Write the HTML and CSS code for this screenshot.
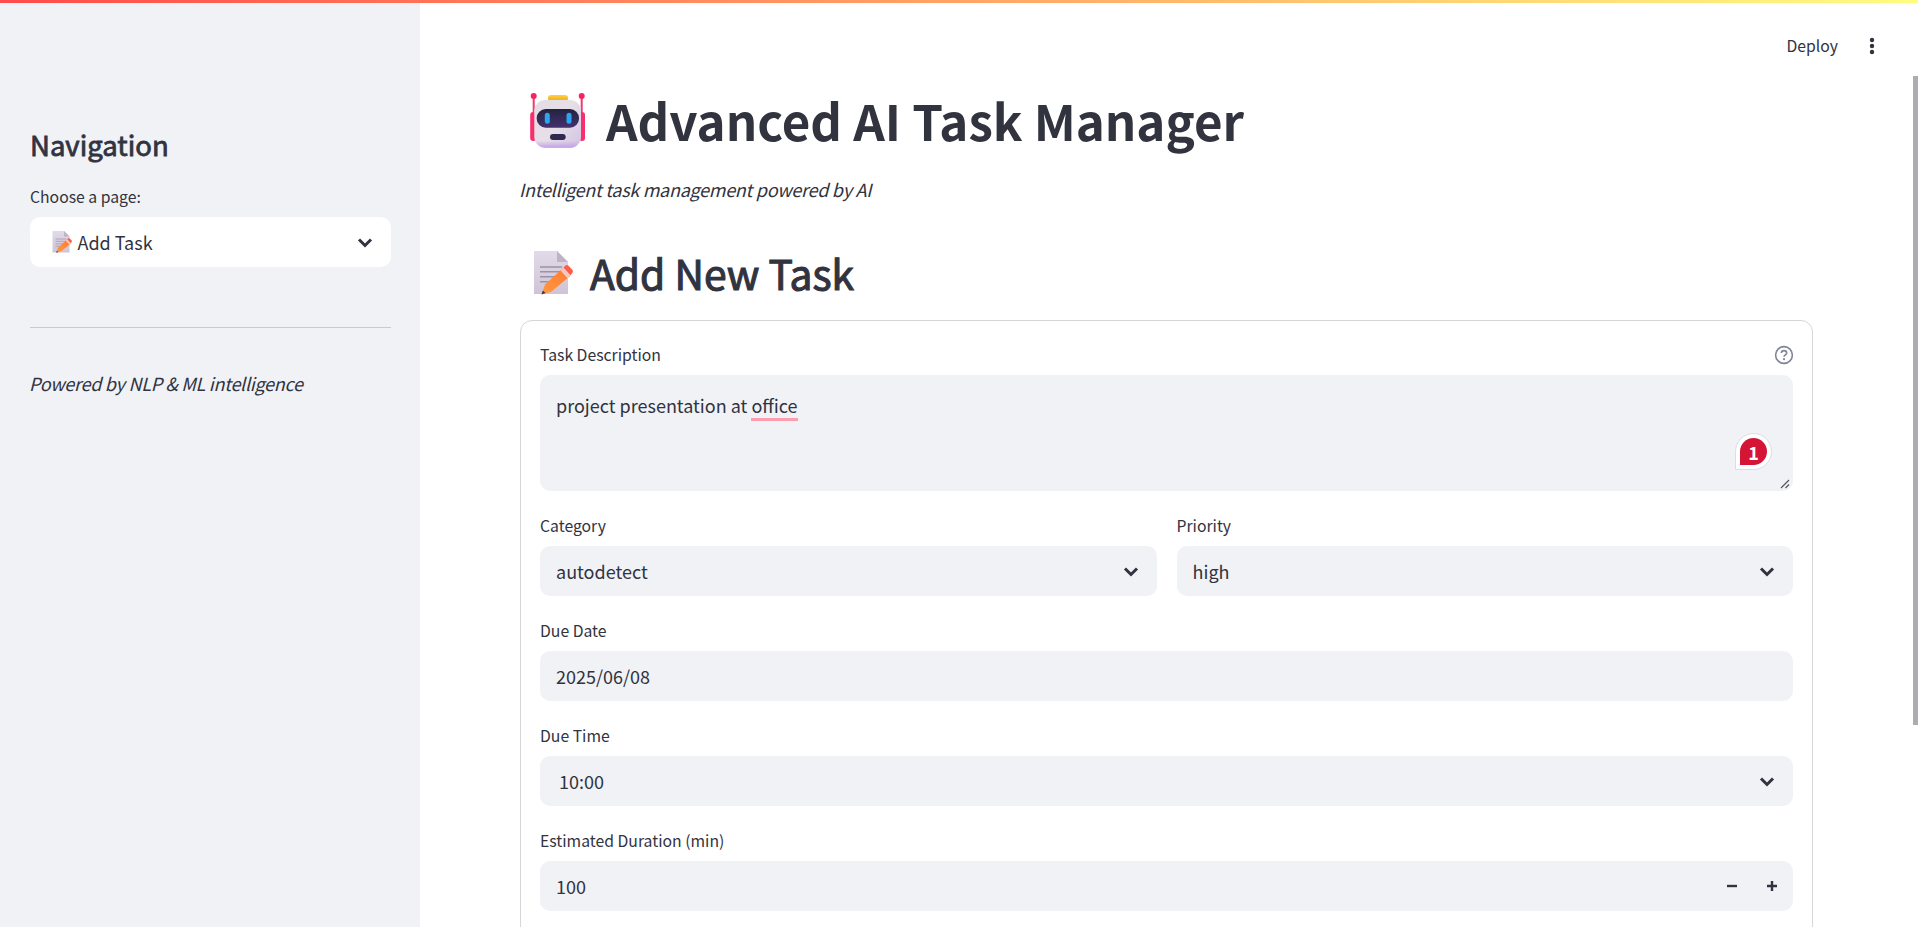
FILE: index.html
```html
<!DOCTYPE html>
<html lang="en">
<head>
<meta charset="utf-8">
<title>Advanced AI Task Manager</title>
<link rel="stylesheet" href="styles.css">
</head>
<body>
<svg class="defs" width="0" height="0" aria-hidden="true">
  <defs>
    <linearGradient id="docFill" x1="0" y1="0" x2="0" y2="1">
      <stop offset="0" stop-color="#e2dae8"/>
      <stop offset="1" stop-color="#cfc4d6"/>
    </linearGradient>
    <linearGradient id="pencilBody" x1="0" y1="1" x2="1" y2="0">
      <stop offset="0" stop-color="#ff9a3c"/>
      <stop offset="1" stop-color="#ff7a35"/>
    </linearGradient>
    <linearGradient id="headFill" x1="0" y1="0" x2="1" y2="0.8">
      <stop offset="0" stop-color="#e3dde3"/>
      <stop offset="0.55" stop-color="#e6dfe8"/>
      <stop offset="1" stop-color="#d6c8e4"/>
    </linearGradient>
    <linearGradient id="headBase" x1="0" y1="0" x2="0" y2="1">
      <stop offset="0.85" stop-color="#c9a8e6" stop-opacity="0"/>
      <stop offset="1" stop-color="#c39ce6"/>
    </linearGradient>
    <linearGradient id="visorFill" x1="0" y1="0" x2="0" y2="1">
      <stop offset="0" stop-color="#22233f"/>
      <stop offset="1" stop-color="#45306e"/>
    </linearGradient>
    <linearGradient id="capFill" x1="0" y1="0" x2="0" y2="1">
      <stop offset="0" stop-color="#ffd23c"/>
      <stop offset="1" stop-color="#eda61f"/>
    </linearGradient>
    <symbol id="memo" viewBox="0 0 60 55">
      <path d="M9 6H32L43 17V49H9Z" fill="url(#docFill)"/>
      <path d="M32 6L43 17H32Z" fill="#bdb3c4"/>
      <path d="M15 22H37M15 26.7H37M15 31.7H32M15 36.7H24" stroke="#9a92a6" stroke-width="1.4" fill="none"/>
      <path d="M16.5 49.5L20 39.5L37 24L44 32L26.5 46.5Z" fill="url(#pencilBody)"/>
      <path d="M37 24L40.5 20.5Q42 19.5 43.5 20.8L47.5 25Q48.5 26.5 47.3 28L44 32Z" fill="#fb5e46"/>
      <path d="M35.5 25.5L38.5 22.5L45.5 30.3L42.5 33.2Z" fill="#f2c9c2"/>
      <path d="M16.5 49.5L17.8 45.5L20.5 48Z" fill="#4b2e52"/>
    </symbol>
    <symbol id="chevron" viewBox="0 0 16 11">
      <path d="M2 2.5L8 8.5L14 2.5" fill="none" stroke="#31333f" stroke-width="3"/>
    </symbol>
  </defs>
</svg>
<div class="topbar"></div>
<div class="app">
  <aside class="sidebar">
    <h2 class="side-title">Navigation</h2>
    <div class="field-label side-label">Choose a page:</div>
    <div class="select select-white">
      <span class="select-value"><svg class="memo-small"><use href="#memo"/></svg>Add Task</span>
      <svg class="chevron"><use href="#chevron"/></svg>
    </div>
    <hr class="side-rule">
    <p class="side-note">Powered by NLP &amp; ML intelligence</p>
  </aside>
  <main class="main">
    <div class="toolbar">
      <span class="deploy">Deploy</span>
      <svg class="kebab" viewBox="0 0 6 18"><circle cx="3" cy="3" r="2.2"/><circle cx="3" cy="9" r="2.2"/><circle cx="3" cy="15" r="2.2"/></svg>
    </div>
    <div class="title-row">
      <svg class="robot" viewBox="0 0 80 70">
        <path d="M13.7 11V32M61.7 11V32" stroke="#ef3a6e" stroke-width="2"/>
        <circle cx="13.7" cy="11" r="3" fill="#f5245f"/>
        <circle cx="61.7" cy="11" r="3" fill="#f5245f"/>
        <rect x="10.2" y="27" width="6" height="29" rx="3" fill="#f72f6c"/>
        <rect x="59" y="27" width="6" height="29" rx="3" fill="#f72f6c"/>
        <rect x="28" y="10" width="20" height="6.5" rx="3.2" fill="url(#capFill)"/>
        <rect x="14.3" y="15" width="46.7" height="47.7" rx="11" fill="url(#headFill)"/>
        <rect x="14.3" y="15" width="46.7" height="47.7" rx="11" fill="url(#headBase)"/>
        <rect x="16.7" y="24" width="42.3" height="18.7" rx="9" fill="url(#visorFill)"/>
        <rect x="24.8" y="27.8" width="5" height="11" rx="2.5" fill="#29a6ee"/>
        <rect x="46.5" y="27.8" width="5" height="11" rx="2.5" fill="#29a6ee"/>
        <rect x="30" y="49" width="15.7" height="6" rx="3" fill="#2f2850"/>
      </svg>
      <h1 class="title">Advanced AI Task Manager</h1>
    </div>
    <p class="subtitle">Intelligent task management powered by AI</p>
    <div class="section-row">
      <svg class="memo-large"><use href="#memo"/></svg>
      <h2 class="section-title">Add New Task</h2>
    </div>
    <form class="card">
      <div class="field">
        <div class="label-row">
          <span class="field-label">Task Description</span>
          <svg class="help" viewBox="0 0 20 20">
            <circle cx="10" cy="10" r="8.4" fill="none" stroke="#808495" stroke-width="1.6"/>
            <path d="M7.3 8C7.4 6.4 8.6 5.6 10 5.6C11.5 5.6 12.7 6.6 12.7 7.9C12.7 9.7 10 9.9 10 11.8" fill="none" stroke="#808495" stroke-width="1.6"/>
            <circle cx="10" cy="14.2" r="1.1" fill="#808495"/>
          </svg>
        </div>
        <div class="textarea">
          <span>project presentation at <span class="misspelled">office</span></span>
          <div class="badge"><span class="badge-dot">1</span></div>
          <svg class="resize" viewBox="0 0 10 10"><path d="M1 9L9 1M5.5 9L9 5.5" stroke="#55565f" stroke-width="1.2" fill="none"/></svg>
        </div>
      </div>
      <div class="two-col">
        <div class="field">
          <div class="label-row"><span class="field-label">Category</span></div>
          <div class="select"><span class="select-value">autodetect</span><svg class="chevron"><use href="#chevron"/></svg></div>
        </div>
        <div class="field">
          <div class="label-row"><span class="field-label">Priority</span></div>
          <div class="select"><span class="select-value">high</span><svg class="chevron"><use href="#chevron"/></svg></div>
        </div>
      </div>
      <div class="field">
        <div class="label-row"><span class="field-label">Due Date</span></div>
        <div class="select"><span class="select-value">2025/06/08</span></div>
      </div>
      <div class="field">
        <div class="label-row"><span class="field-label">Due Time</span></div>
        <div class="select"><span class="select-value time-value">10:00</span><svg class="chevron"><use href="#chevron"/></svg></div>
      </div>
      <div class="field">
        <div class="label-row"><span class="field-label">Estimated Duration (min)</span></div>
        <div class="select">
          <span class="select-value">100</span>
          <span class="steppers">
            <svg class="stepper" viewBox="0 0 10 10"><path d="M0 5H10" stroke="#31333f" stroke-width="2.4"/></svg>
            <svg class="stepper" viewBox="0 0 10 10"><path d="M0 5H10M5 0V10" stroke="#31333f" stroke-width="2.4"/></svg>
          </span>
        </div>
      </div>
    </form>
    <div class="scrollbar"></div>
  </main>
</div>
</body>
</html>
```
FILE: styles.css
```css
* { box-sizing: border-box; }
html, body { margin: 0; height: 100%; overflow: hidden; }
body {
  display: flex;
  flex-direction: column;
  font-family: "Noto Sans CJK SC", "Source Sans Pro", "Noto Sans", sans-serif;
  color: #31333f;
  background: #fff;
}
.defs { position: absolute; }
.topbar {
  flex: none;
  height: 3px;
  background: linear-gradient(to right, #ff4b4b, #fffd80);
}
.app { flex: 1; display: flex; min-height: 0; }

.sidebar {
  flex: none;
  width: 420px;
  padding: 121px 29px 0 30px;
  background: #f0f2f6;
}
.side-title {
  margin: 0 0 20px;
  font-size: 27.5px;
  line-height: 40px;
  font-weight: 400;
  -webkit-text-stroke: 0.8px #31333f;
}
.field-label { font-size: 15.75px; line-height: 26px; }
.side-label { margin-bottom: 7px; }
.select {
  display: flex;
  align-items: center;
  justify-content: space-between;
  height: 50px;
  padding: 0 18px 0 16px;
  border-radius: 10px;
  background: #f0f2f6;
  font-size: 18px;
}
.select-white { background: #fff; }
.select-value { display: flex; align-items: center; }
.time-value { padding-left: 3px; }
.memo-small { width: 30px; height: 27.5px; margin-left: 1.5px; }
.chevron { width: 16px; height: 11px; }
.side-rule {
  margin: 60px 0 0;
  border: 0;
  border-top: 1px solid #c9cad0;
}
.side-note, .subtitle {
  margin-left: -1px;
  font-size: 18px;
  line-height: 32px;
  font-style: italic;
  letter-spacing: -0.28px;
}
.side-note { margin-top: 39px; margin-bottom: 0; }

.main {
  position: relative;
  flex: 1;
  min-width: 0;
  padding: 0 105px 0 100px;
  overflow: hidden;
}
.toolbar {
  display: flex;
  justify-content: flex-end;
  align-items: center;
  gap: 31px;
  height: 82px;
  margin-right: -62px;
  padding-top: 4px;
}
.deploy { font-size: 15.75px; line-height: 26px; }
.kebab { width: 6px; height: 18px; fill: #31333f; }
.title-row { display: flex; align-items: center; height: 70px; gap: 6px; }
.robot { flex: none; width: 80px; height: 70px; }
.title { margin: 0; font-size: 49.25px; line-height: 70px; font-weight: 700; white-space: nowrap; }
.subtitle { margin-top: 18px; margin-bottom: 0; }
.section-row { display: flex; align-items: center; height: 55px; margin-top: 40px; gap: 5px; padding-left: 5px; }
.memo-large { flex: none; width: 60px; height: 55px; }
.section-title {
  margin: 0;
  font-size: 40.75px;
  line-height: 55px;
  font-weight: 400;
  -webkit-text-stroke: 1.1px #31333f;
}

.card {
  display: flex;
  flex-direction: column;
  gap: 22px;
  margin-top: 20px;
  padding: 21px 19px 100px;
  border: 1px solid #d5d6da;
  border-radius: 12px;
}
.field { min-width: 0; }
.label-row {
  display: flex;
  justify-content: space-between;
  align-items: center;
  height: 26px;
  margin-bottom: 7px;
}
.help { width: 20px; height: 20px; margin-right: -1px; }
.two-col { display: grid; grid-template-columns: 1fr 1fr; gap: 20px; }
.textarea {
  position: relative;
  height: 116px;
  padding: 14px 16px;
  border-radius: 10px;
  background: #f0f2f6;
  font-size: 18px;
  line-height: 32px;
}
.misspelled { border-bottom: 3px solid #ff9db0; }
.badge {
  position: absolute;
  right: 21px;
  bottom: 21px;
  display: flex;
  align-items: center;
  justify-content: center;
  width: 37px;
  height: 37px;
  border: 1px solid #dcdde3;
  border-radius: 50% 50% 50% 0;
  background: #fff;
}
.badge-dot {
  display: flex;
  align-items: center;
  justify-content: center;
  width: 27px;
  height: 27px;
  border-radius: 50% 50% 50% 0;
  background: #d41535;
  color: #fff;
  font-size: 18px;
  font-weight: 700;
  line-height: 1;
}
.resize { position: absolute; right: 3px; bottom: 2px; width: 10px; height: 10px; }
.steppers { display: flex; gap: 30px; margin-right: -2px; }
.stepper { width: 10px; height: 10px; }
.scrollbar {
  position: absolute;
  top: 73px;
  right: 0;
  width: 5px;
  height: 649px;
  background: #adadb1;
}
```
